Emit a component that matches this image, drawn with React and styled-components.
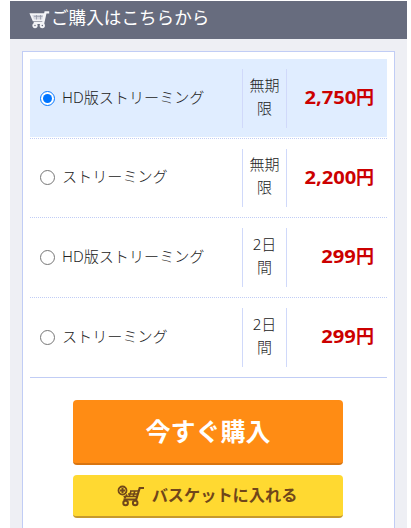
import { useState } from "react";
import styled, { createGlobalStyle } from "styled-components";

const GlobalStyle = createGlobalStyle`
  * {
    box-sizing: border-box;
  }

  body {
    margin: 0;
    background-color: #fff;
    color: #222;
    font-family: "Noto Sans", "Noto Sans CJK JP", sans-serif;
    font-size: 15px;
    overflow: hidden;
  }
`;

const PurchaseContainer = styled.section`
  width: 397px;
  height: 527px;
  margin: 1px 0 0 10px;
  background-color: #eeeff4;
  overflow: hidden;
`;

const PurchaseHeading = styled.h2`
  display: flex;
  align-items: center;
  gap: 1px;
  height: 38px;
  margin: 0;
  padding: 0 0 5px 19px;
  background-color: #676c7e;
  color: #fff;
  font-size: 17.6px;
  font-weight: 400;
  line-height: 33px;
`;

const HeadingCart = styled.svg`
  width: 21px;
  height: 19px;
  margin-top: 4px;
`;

const PurchaseCard = styled.div`
  width: 373px;
  height: 500px;
  margin: 12px 0 0 12px;
  padding: 7px;
  border: 1px solid #c1cdf5;
  background-color: #fff;
`;

const PriceList = styled.ul`
  margin: 0 0 22px;
  padding: 0;
  list-style: none;
  border-bottom: 1px solid #c1cdf5;
`;

const PriceRow = styled.li`
  display: flex;
  height: ${(props) => props.$height}px;
  padding: 10px 0;
  background-color: ${(props) => (props.$selected ? "#e0edff" : "#fff")};
  background-clip: padding-box;
  border-bottom: 1px dotted #c1cdf5;
  box-shadow: inset 0 -1px #fff;

  &:last-child {
    border-bottom: none;
  }
`;

const PriceLabel = styled.label`
  display: flex;
  align-items: center;
  width: 212px;
  padding: 0 0 1px 10px;
  line-height: 23px;
`;

const PriceRadio = styled.input`
  width: 15px;
  height: 15px;
  margin: 0 7px 0 0;
  accent-color: #0075ff;
`;

const LabelText = styled.span`
  margin-top: -2px;
  font-size: 15.1px;
  font-weight: 300;
`;

const Period = styled.div`
  display: flex;
  align-items: center;
  width: 45px;
  padding: 0 6px 4px;
  border: solid #d0d9fa;
  border-width: 0 1px;
  font-weight: 300;
  line-height: 23px;
  text-align: center;
  word-break: break-all;
`;

const Price = styled.div`
  display: flex;
  flex: 1;
  align-items: center;
  justify-content: flex-end;
  padding: 0 13px 3px 0;
  color: #c00;
  font-size: 18px;
  font-weight: 700;
  line-height: 24px;
`;

const Amount = styled.span`
  transform: scaleX(1.12);
  transform-origin: right;
`;

const ButtonGroup = styled.div`
  display: flex;
  flex-direction: column;
  align-items: center;
  gap: 10px;
  padding-right: 1px;
`;

const BuyButton = styled.button`
  width: 270px;
  height: 65px;
  padding: 0 0 4px;
  border: none;
  border-bottom: 2px solid #d97510;
  border-radius: 4px;
  background-color: #ff8c14;
  color: #fff;
  font-family: inherit;
  font-size: 25px;
  font-weight: 700;
  cursor: pointer;
`;

const BasketButton = styled(BuyButton)`
  display: flex;
  align-items: center;
  justify-content: center;
  gap: 7px;
  height: 43px;
  padding: 0 2px 4px 0;
  border-bottom-color: #c79a2c;
  background-color: #ffd931;
  color: #70461a;
  font-size: 16.2px;
`;

const BasketCart = styled.svg`
  width: 28px;
  height: 22px;
  margin-top: 4px;
`;

const plans = [
  { label: "HD版ストリーミング", period: "無期限", price: "2,750", height: 80 },
  { label: "ストリーミング", period: "無期限", price: "2,200", height: 79 },
  { label: "HD版ストリーミング", period: "2日間", price: "299", height: 80 },
  { label: "ストリーミング", period: "2日間", price: "299", height: 79 },
];

function App() {
  const [selected, setSelected] = useState(0);

  return (
    <>
      <GlobalStyle />
      <PurchaseContainer>
        <PurchaseHeading>
          <HeadingCart viewBox="0 0 21 19" fill="none" stroke="#f3f4f7">
            <path d="M1.8 4.2h13.4l-1.3 6.2H4.4z" fill="#d5d7e0" strokeWidth="1.8" />
            <path d="M5 6.3h8.5M7.5 5v4.5M11.5 5v4.5" stroke="#9398a7" strokeWidth="0.8" />
            <path d="M20.2 2.4h-3.7l-2.3 10.4H4.7" strokeWidth="2.3" />
            <circle cx="6" cy="15.6" r="1.7" strokeWidth="1.9" />
            <circle cx="13.3" cy="15.6" r="1.7" strokeWidth="1.9" />
          </HeadingCart>
          ご購入はこちらから
        </PurchaseHeading>
        <PurchaseCard>
          <PriceList>
            {plans.map((plan, index) => (
              <PriceRow key={index} $height={plan.height} $selected={selected === index}>
                <PriceLabel>
                  <PriceRadio
                    type="radio"
                    name="plan"
                    checked={selected === index}
                    onChange={() => setSelected(index)}
                  />
                  <LabelText>{plan.label}</LabelText>
                </PriceLabel>
                <Period>{plan.period}</Period>
                <Price>
                  <Amount>{plan.price}</Amount>円
                </Price>
              </PriceRow>
            ))}
          </PriceList>
          <ButtonGroup>
            <BuyButton>今すぐ購入</BuyButton>
            <BasketButton>
              <BasketCart viewBox="0 0 28 22" fill="none" stroke="#70461a">
                <circle cx="5.5" cy="5.5" r="4" strokeWidth="1.8" />
                <path d="M5.5 3v5M3 5.5h5" strokeWidth="2" />
                <path d="M27 3h-4.3l-3.5 11.5H6.5" strokeWidth="2.2" />
                <path d="M6.5 11.5h13M11 9h9.5M13 6h8M14 6l-2 6M18 5.5l-2 6.5M10 9.5l-2.5 4" strokeWidth="1.6" />
                <circle cx="8.6" cy="18" r="2.3" strokeWidth="2" />
                <circle cx="18.2" cy="18" r="2.3" strokeWidth="2" />
              </BasketCart>
              バスケットに入れる
            </BasketButton>
          </ButtonGroup>
        </PurchaseCard>
      </PurchaseContainer>
    </>
  );
}

export default App;
